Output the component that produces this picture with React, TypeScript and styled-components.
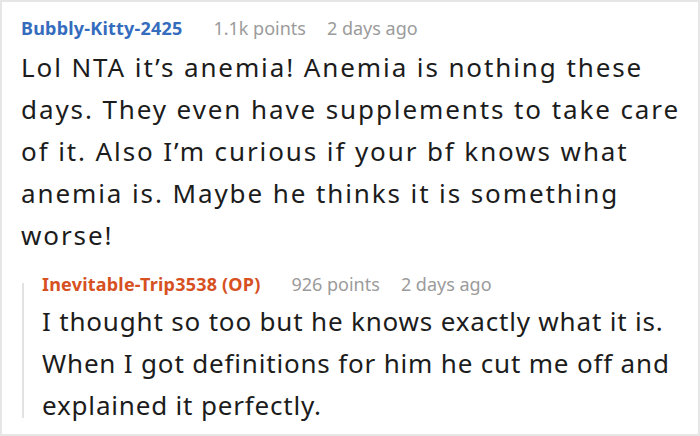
import React from "react";
import styled, { createGlobalStyle } from "styled-components";

type CommentType = {
  author: string;
  isOp?: boolean;
  points: string;
  postedAt: string;
  body: string;
};

const comment: CommentType = {
  author: "Bubbly-Kitty-2425",
  points: "1.1k points",
  postedAt: "2 days ago",
  body:
    "Lol NTA it\u2019s anemia! Anemia is nothing these days. They even have supplements to take care of it. Also I\u2019m curious if your bf knows what anemia is. Maybe he thinks it is something worse!",
};

const reply: CommentType = {
  author: "Inevitable-Trip3538 (OP)",
  isOp: true,
  points: "926 points",
  postedAt: "2 days ago",
  body:
    "I thought so too but he knows exactly what it is. When I got definitions for him he cut me off and explained it perfectly.",
};

const GlobalStyle = createGlobalStyle`
  html, body {
    margin: 0;
    padding: 0;
    background: #fff;
  }
  body {
    font-family: "Noto Sans", "Open Sans", sans-serif;
  }
`;

const Frame = styled.div`
  box-sizing: border-box;
  width: 700px;
  height: 436px;
  border: 2px solid #e6e6e6;
  padding: 11px 6px 0 19px;
  overflow: hidden;
`;

const Header = styled.div`
  display: flex;
  align-items: baseline;
  height: 30px;
  line-height: 30px;
  font-size: 18px;
  white-space: nowrap;
`;

const Author = styled.span<{ $op?: boolean }>`
  font-weight: 700;
  letter-spacing: 0.2px;
  color: ${({ $op }) => ($op ? "#d6511f" : "#356cbd")};
  margin-right: 31px;
`;

const Meta = styled.span`
  color: #9b9b9b;
  margin-right: 21px;
`;

const Body = styled.p<{ $tracking: number }>`
  margin: 3px 0 0;
  font-size: 26px;
  line-height: 42px;
  color: #1c1c1c;
  letter-spacing: ${({ $tracking }) => $tracking}px;
`;

const Reply = styled.div`
  display: flex;
  margin-top: 13px;
`;

const ThreadLine = styled.div`
  flex: none;
  width: 2px;
  margin: 14px 0 8px 1px;
  background: #e2e2e2;
`;

const ReplyContent = styled.div`
  flex: 1;
  min-width: 0;
  padding-left: 18px;

  ${Body} {
    margin-top: 1px;
  }
`;

const Comment: React.FC<{ data: CommentType; tracking: number }> = ({
  data,
  tracking,
}) => (
  <>
    <Header>
      <Author $op={data.isOp}>{data.author}</Author>
      <Meta>{data.points}</Meta>
      <Meta>{data.postedAt}</Meta>
    </Header>
    <Body $tracking={tracking}>{data.body}</Body>
  </>
);

export default function App() {
  return (
    <>
      <GlobalStyle />
      <Frame>
        <Comment data={comment} tracking={1.9} />
        <Reply>
          <ThreadLine />
          <ReplyContent>
            <Comment data={reply} tracking={0.82} />
          </ReplyContent>
        </Reply>
      </Frame>
    </>
  );
}
